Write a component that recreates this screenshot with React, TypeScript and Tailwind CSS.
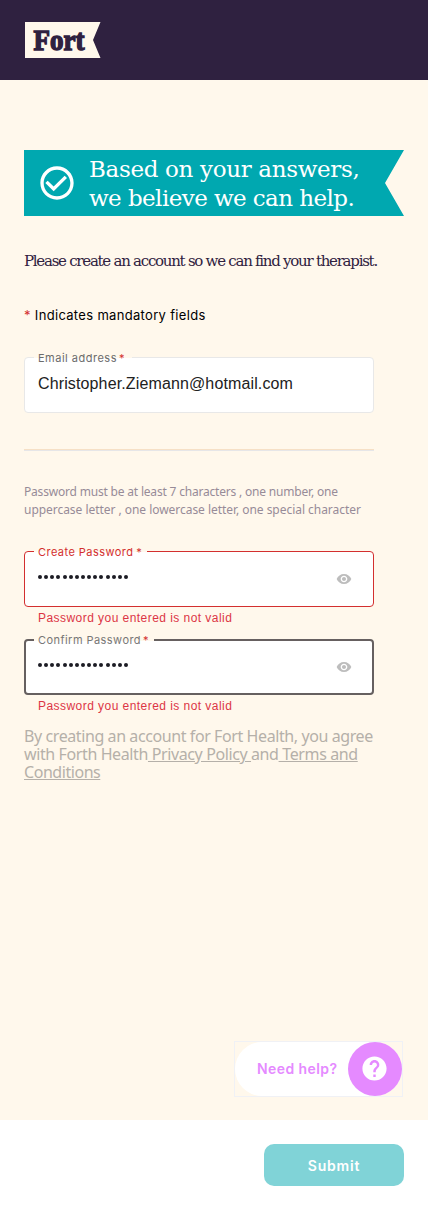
import type { ReactNode } from 'react';
import { MdVisibility, MdHelp, MdCheckCircleOutline } from 'react-icons/md';

const errorText = 'Password you entered is not valid';

function Field({
  label,
  children,
  border,
  labelClass,
  starClass,
  notch,
}: {
  label: string;
  children: ReactNode;
  border: string;
  labelClass: string;
  starClass: string;
  notch: string;
}) {
  return (
    <div className={`relative h-14 w-[350px] rounded bg-white ${border}`}>
      <div className={`absolute ${notch}`} />
      <div
        className={`absolute whitespace-nowrap font-['Inter',sans-serif] text-[11px] leading-[14px] ${labelClass}`}
      >
        {label}
        <span className={starClass}>*</span>
      </div>
      {children}
    </div>
  );
}

function PasswordValue({ padding }: { padding: string }) {
  return (
    <div className={`flex h-full items-center justify-between ${padding}`}>
      <div className="flex gap-[2.15px] pb-1">
        {Array.from({ length: 15 }, (_, i) => (
          <span key={i} className="size-[4px] rounded-full bg-[#1c1c24]" />
        ))}
      </div>
      <MdVisibility className="size-4 text-[#bdbdbd]" />
    </div>
  );
}

function ErrorLine() {
  return (
    <div className="h-8 pl-[14px] pt-[3px] font-['Liberation_Sans',sans-serif] text-[12px] leading-4 tracking-[0.45px] text-[#dc3545]">
      {errorText}
    </div>
  );
}

export default function App() {
  return (
    <div className="flex h-[1210px] w-[428px] flex-col overflow-hidden bg-[#fff8ec]">
      <header className="h-20 shrink-0 bg-[#2f2140] pl-[25px] pt-[22px]">
        <svg width="76" height="36" viewBox="0 0 76 36">
          <path d="M0 0H75.500L68 18L75.500 36H0Z" fill="#fff8ec" />
          <text
            x="8.500"
            y="27.500"
            textLength="51"
            lengthAdjust="spacingAndGlyphs"
            fontFamily="Liberation Serif, serif"
            fontWeight="700"
            fontSize="29"
            fill="#2f2140"
            stroke="#2f2140"
            strokeWidth="1.4"
          >
            Fort
          </text>
        </svg>
      </header>

      <main className="flex flex-1 flex-col px-6 pt-[70px]">
        <div className="flex h-[66px] items-center bg-[#00a8b0] pl-[13px] [clip-path:polygon(0_0,100%_0,361px_50%,100%_100%,0_100%)]">
          <MdCheckCircleOutline className="size-10 text-white" />
          <div className="ml-3 whitespace-nowrap pt-0.5 font-['DejaVu_Serif',serif] text-[23px] leading-[29px] text-white">
            <div className="tracking-[-0.33px]">Based on your answers,</div>
            <div className="tracking-[-0.57px]">we believe we can help.</div>
          </div>
        </div>

        <h1 className="mt-[35px] h-5 whitespace-nowrap font-['DejaVu_Serif',serif] text-[15px] leading-5 tracking-[-1.26px] text-[#2f2140]">
          Please create an account so we can find your therapist.
        </h1>

        <p className="mt-[34px] h-5 whitespace-nowrap font-['Inter',sans-serif] text-[13px] leading-5 tracking-[0.32px] text-black">
          <span className="text-[#d32f2f]">*</span> Indicates mandatory fields
        </p>

        <div className="mt-8">
          <Field
            label="Email address"
            border="border border-[#e8e8e8]"
            notch="-top-px left-[9px] h-px w-[98px] bg-[#fff8ec]"
            labelClass="-top-[7px] left-[13px] text-[#6b6b6b] tracking-[0.5px]"
            starClass="ml-[2px] text-[#d32f2f]"
          >
            <div className="pl-[13px] pt-4 font-['Liberation_Sans',sans-serif] text-[16px] leading-5 tracking-[0.13px] text-[#212121]">
              Christopher.Ziemann@hotmail.com
            </div>
          </Field>
        </div>

        <div className="mt-9 h-[2px] w-[350px] border-b border-t border-b-[#e6e6e8] border-t-[#f6e0c6]" />

        <div className="mt-8 whitespace-nowrap font-['Noto_Sans',sans-serif] text-[12px] leading-[18px] text-[#978b98]">
          <div className="tracking-[-0.19px]">Password must be at least 7 characters , one number, one</div>
          <div className="tracking-[-0.04px]">uppercase letter , one lowercase letter, one special character</div>
        </div>

        <div className="mt-8">
          <Field
            label="Create Password"
            border="border border-[#d32f2f]"
            notch="-top-px left-[9px] h-px w-[113px] bg-[#fff8ec]"
            labelClass="-top-[7px] left-[13px] text-[#d32f2f] tracking-[0.45px]"
            starClass="ml-[3px]"
          >
            <PasswordValue padding="pl-[13px] pr-[21px]" />
          </Field>
          <ErrorLine />
          <Field
            label="Confirm Password"
            border="border-2 border-[#666060]"
            notch="-top-[2px] left-2 h-[2px] w-[120px] bg-[#fff8ec]"
            labelClass="-top-[8px] left-3 text-[#777777] tracking-[0.45px]"
            starClass="ml-[2px] text-[#d32f2f]"
          >
            <PasswordValue padding="pl-3 pr-5" />
          </Field>
          <ErrorLine />
        </div>

        <div className="whitespace-nowrap font-['Noto_Sans',sans-serif] text-[16px] leading-[18px] text-[#b5b0a9]">
          <div className="tracking-[-0.41px]">By creating an account for Fort Health, you agree</div>
          <div className="tracking-[-0.39px]">
            with Forth Health<a className="whitespace-pre underline"> Privacy Policy </a>and
            <a className="whitespace-pre underline"> Terms and</a>
          </div>
          <div className="tracking-[-0.45px]">
            <a className="underline">Conditions</a>
          </div>
        </div>

        <div className="-mr-[23px] mb-[23px] mt-auto flex self-end pr-6">
          <div className="flex h-14 w-[169px] items-center border border-[#f0f1f5]">
            <div className="flex h-[54px] w-[167px] items-center justify-between rounded-full bg-white pl-[22px]">
              <span className="whitespace-nowrap font-['Inter',sans-serif] text-[14px] font-semibold leading-5 tracking-[0.42px] text-[#e58aff]">
                Need help?
              </span>
              <span className="flex size-[54px] items-center justify-center rounded-full bg-[#e58aff] pb-px pr-px">
                <MdHelp className="size-[29px] text-white" />
              </span>
            </div>
          </div>
        </div>
      </main>

      <footer className="flex h-[90px] shrink-0 justify-end bg-white pr-6 pt-6">
        <button className="h-[42px] w-[140px] rounded-[10px] bg-[#80d3d7] font-['Inter',sans-serif] text-[14px] font-semibold tracking-[0.8px] text-white">
          Submit
        </button>
      </footer>
    </div>
  );
}
